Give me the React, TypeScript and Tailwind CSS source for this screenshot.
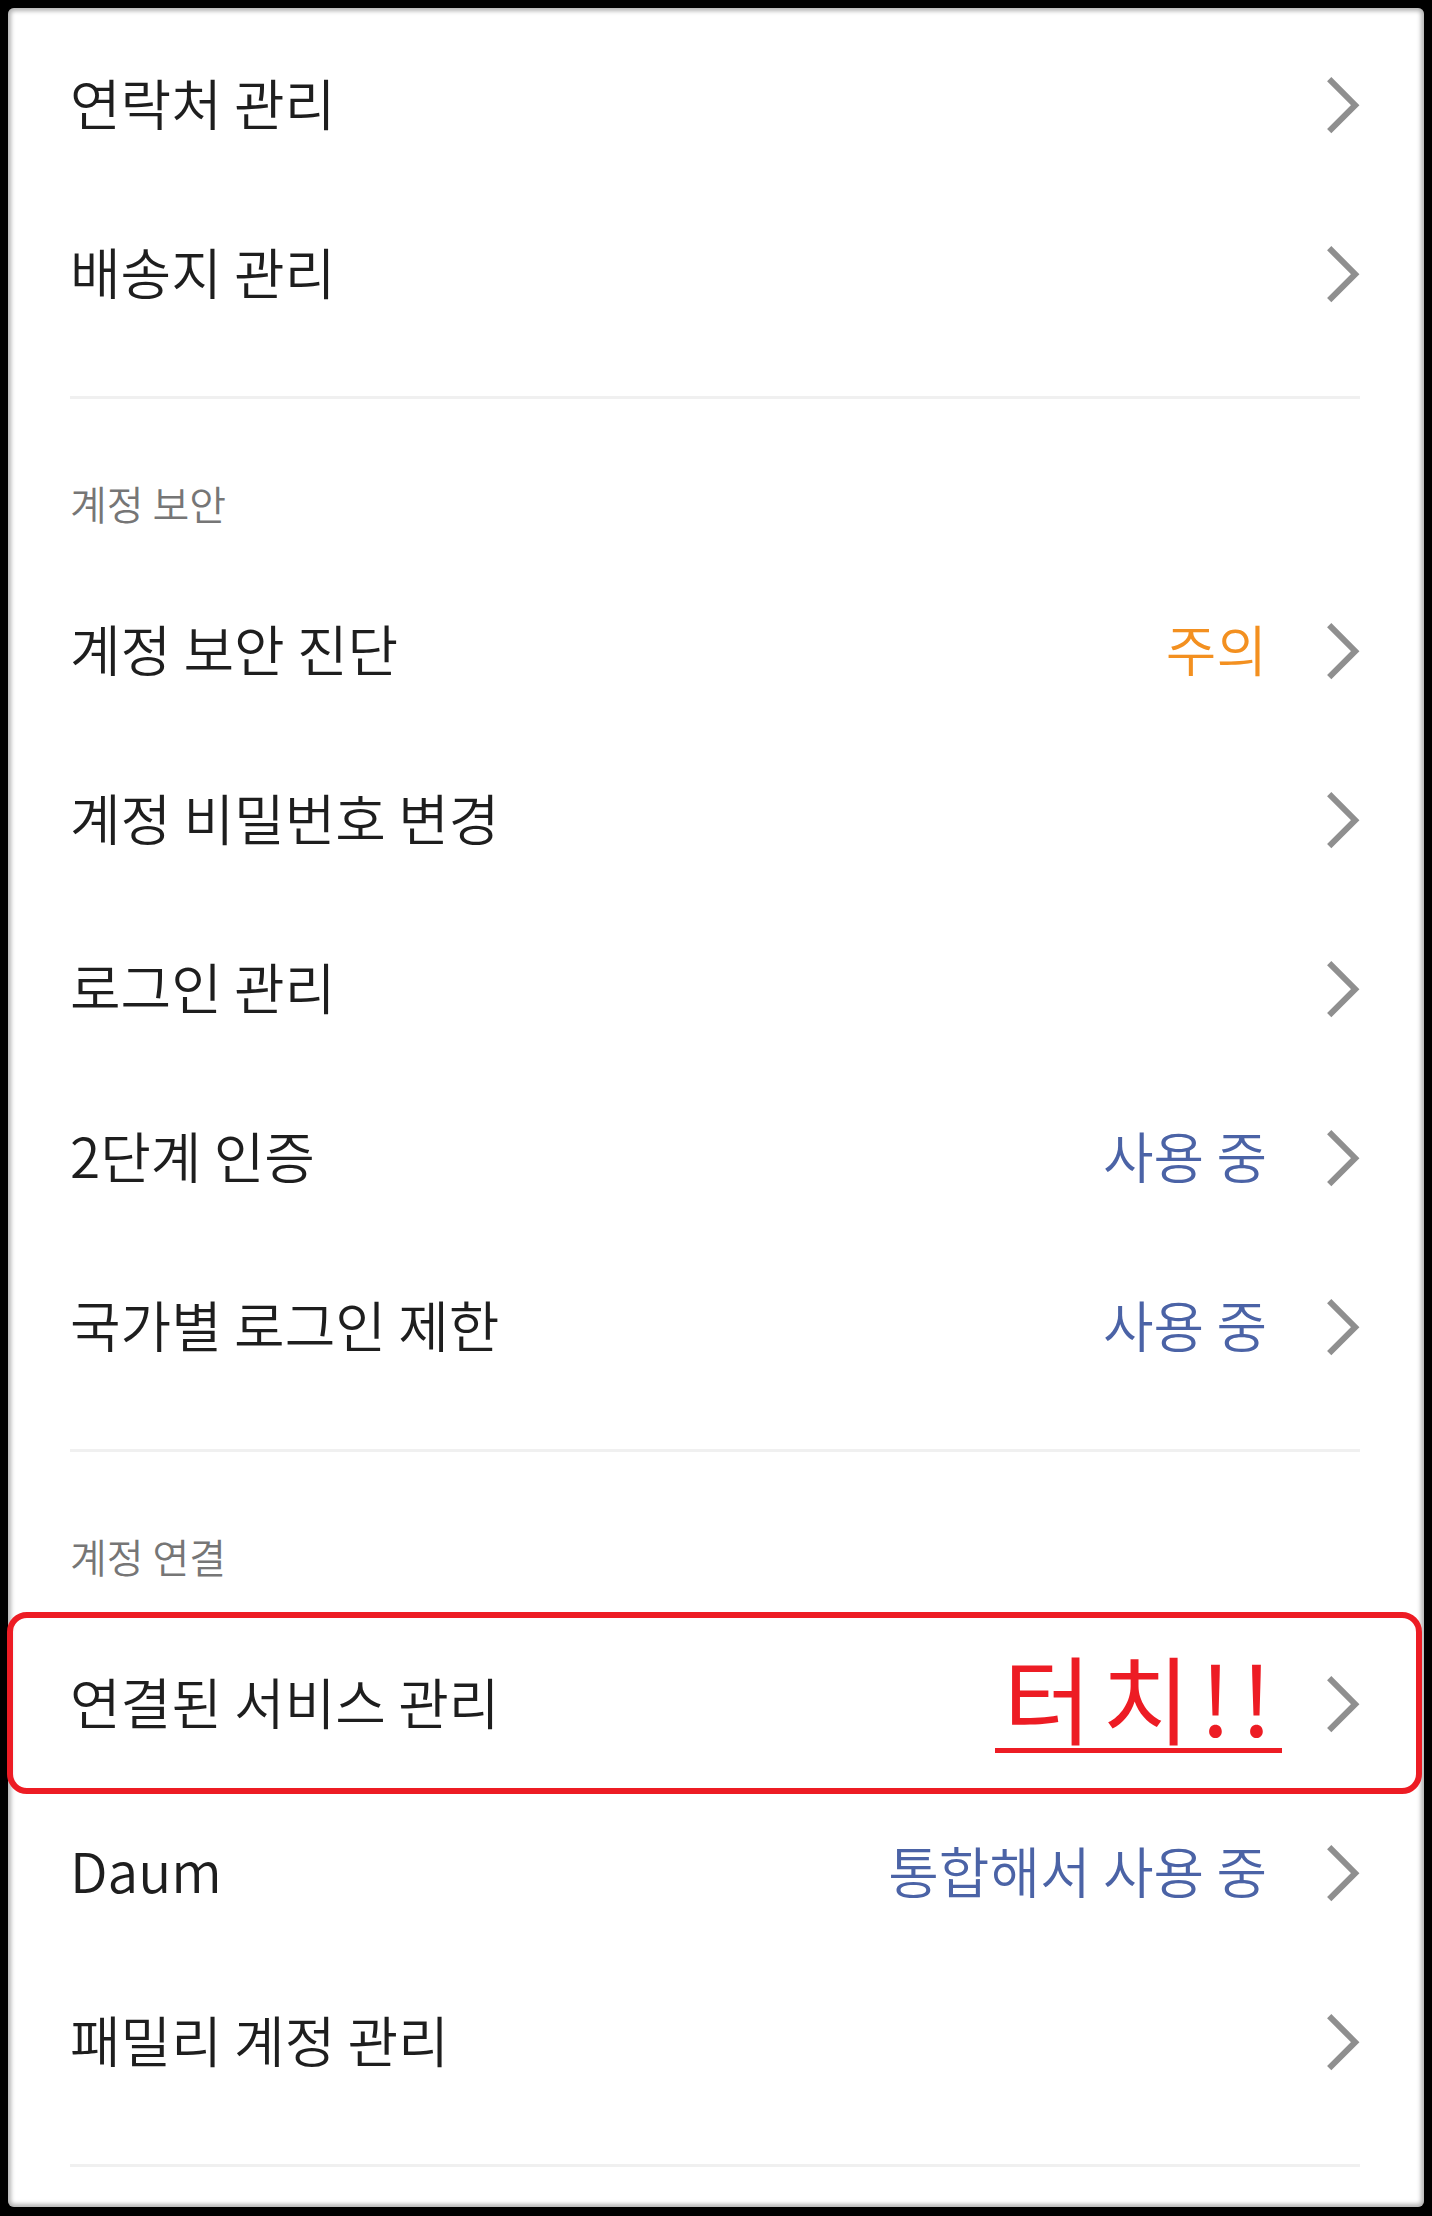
import type { ReactNode } from "react";

const Chevron = () => (
  <svg width="33" height="57" viewBox="0 0 33 57" fill="none" className="mt-[8px] shrink-0">
    <path d="M2.2 2.2L28.2 28.2L2.2 54.2" stroke="#8f8f8f" strokeWidth="6" />
  </svg>
);

function Row({ label, value }: { label: string; value?: ReactNode }) {
  return (
    <div className="flex h-[169px] items-center justify-between pb-[4px]">
      <span className="text-[55px] leading-none font-[350] text-[#1e1e1e]">{label}</span>
      <div className="flex items-center">
        {value}
        <Chevron />
      </div>
    </div>
  );
}

const Value = ({ text, color }: { text: string; color: string }) => (
  <span className={`mr-[60px] text-[55px] leading-none font-[350] ${color}`}>{text}</span>
);

const Divider = () => <div className="mt-[39px] h-[3px] bg-[#f0f0f0]" />;

const Header = ({ text }: { text: string }) => (
  <div className="h-[166px] pt-[84px] text-[40px] leading-none font-[350] text-[#767676]">{text}</div>
);

export default function App() {
  return (
    <div className="h-[2216px] w-[1432px] bg-black pt-2 pr-2 pb-[9px] pl-2 font-['Noto_Sans_CJK_KR',sans-serif]">
      <div className="relative h-full rounded-[6px] bg-white pt-[11px] pr-[64px] pl-[62px] shadow-[inset_0_0_4px_3px_rgba(0,0,0,0.3)]">
        <Row label="연락처 관리" />
        <Row label="배송지 관리" />
        <Divider />

        <Header text="계정 보안" />
        <Row label="계정 보안 진단" value={<Value text="주의" color="text-[#f39020]" />} />
        <Row label="계정 비밀번호 변경" />
        <Row label="로그인 관리" />
        <Row label="2단계 인증" value={<Value text="사용 중" color="text-[#4b63a6]" />} />
        <Row label="국가별 로그인 제한" value={<Value text="사용 중" color="text-[#4b63a6]" />} />
        <Divider />

        <Header text="계정 연결" />
        <Row
          label="연결된 서비스 관리"
          value={
            <span className="mr-[45px] inline-block border-b-[5px] border-[#ed1c24] pb-[4px] pl-[8px] text-[96px] leading-none tracking-[10px] text-[#ed1c24]">
              터치!!
            </span>
          }
        />
        <Row label="Daum" value={<Value text="통합해서 사용 중" color="text-[#4b63a6]" />} />
        <Row label="패밀리 계정 관리" />
        <Divider />

        {/* annotation box */}
        <div className="pointer-events-none absolute top-[1604px] -left-px h-[182px] w-[1415px] rounded-[20px] border-[6px] border-[#ed1c24]" />
      </div>
    </div>
  );
}
